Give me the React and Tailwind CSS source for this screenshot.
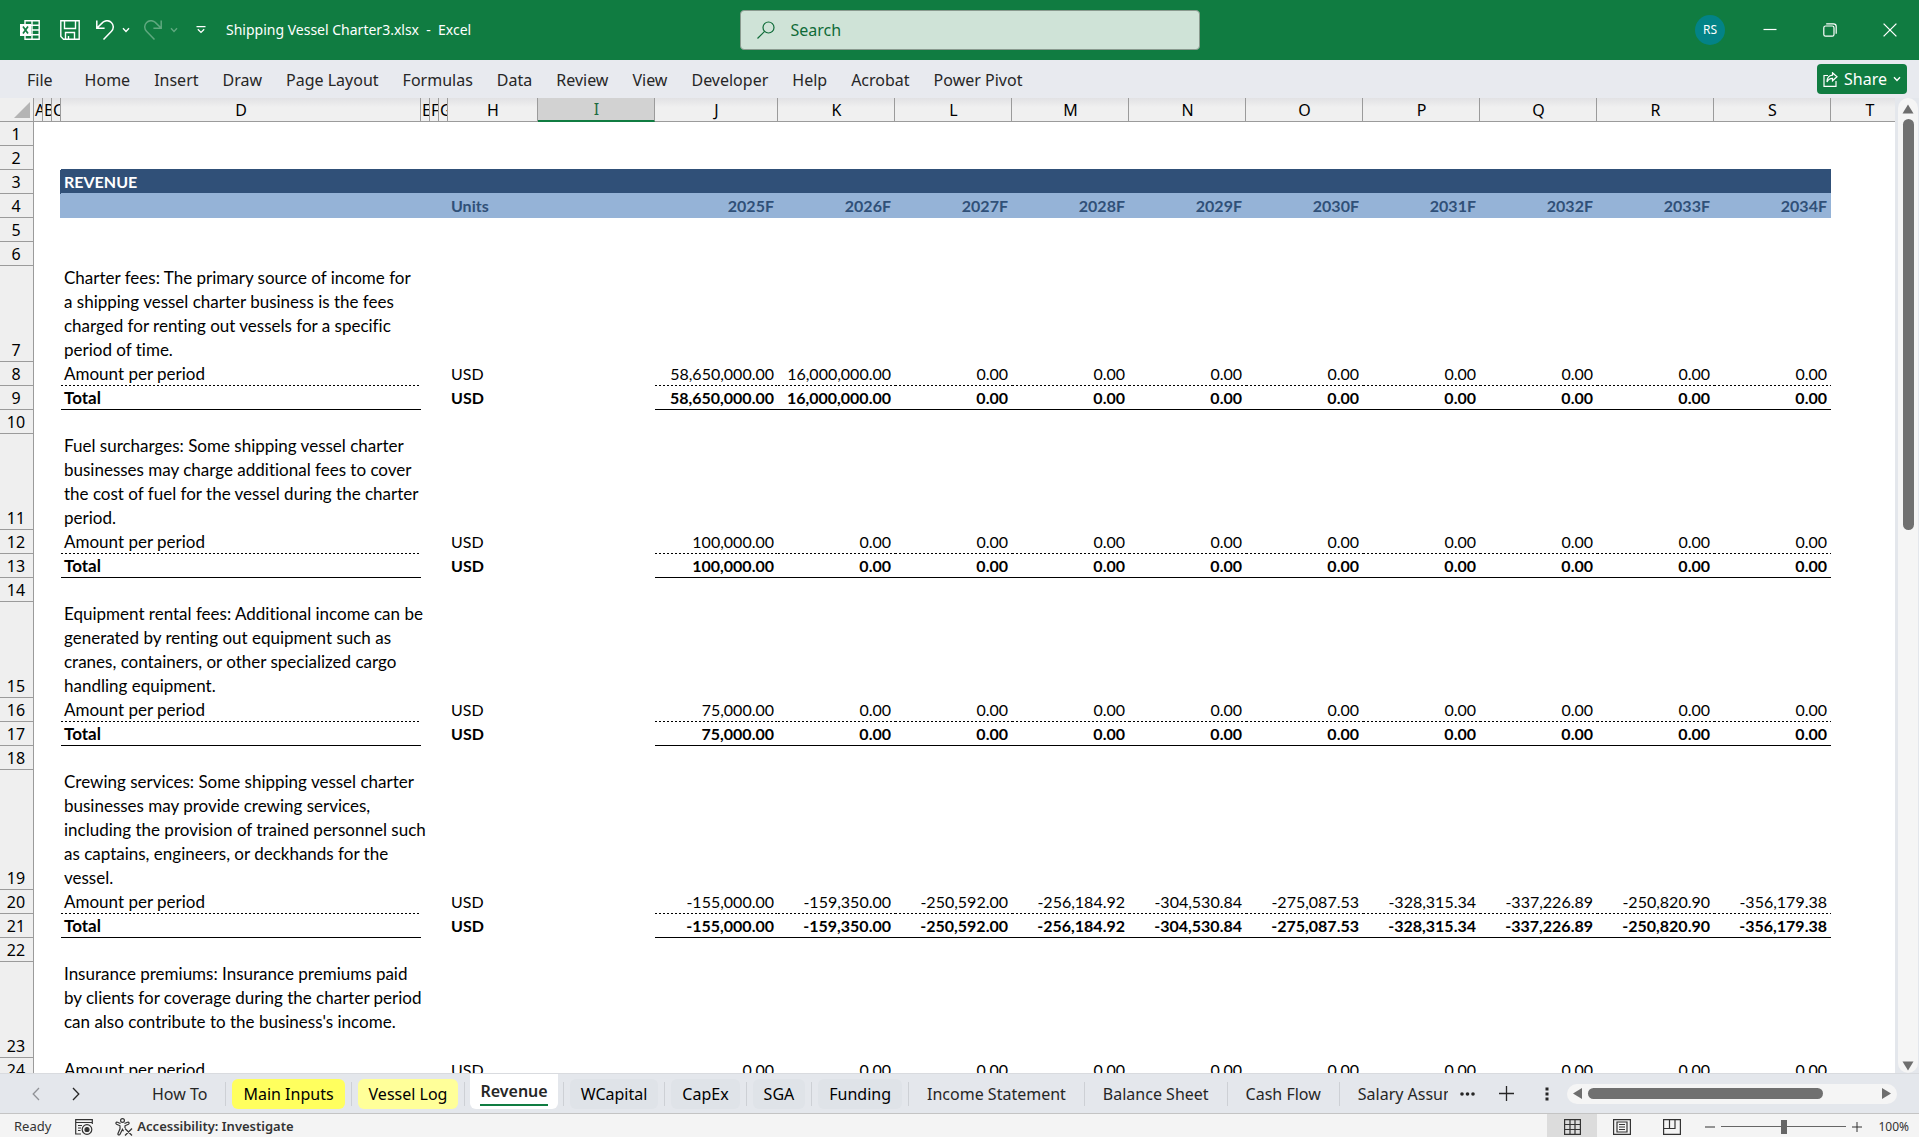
import { useState } from 'react';
import clsx from 'clsx';

const MENU = ['Home', 'Insert', 'Draw', 'Page Layout', 'Formulas', 'Data', 'Review', 'View', 'Developer', 'Help', 'Acrobat', 'Power Pivot'];

const COLUMNS = [
  { id: 'A', cls: 'w-[9px]' },
  { id: 'B', cls: 'w-[9px]' },
  { id: 'C', cls: 'w-[9px]' },
  { id: 'D', cls: 'w-[360px]' },
  { id: 'E', cls: 'w-[9px]' },
  { id: 'F', cls: 'w-[9px]' },
  { id: 'G', cls: 'w-[9px]' },
  { id: 'H', cls: 'w-[90px]' },
  { id: 'I', cls: 'w-[117px]' },
  { id: 'J', cls: 'w-[123px]' },
  { id: 'K', cls: 'w-[117px]' },
  { id: 'L', cls: 'w-[117px]' },
  { id: 'M', cls: 'w-[117px]' },
  { id: 'N', cls: 'w-[117px]' },
  { id: 'O', cls: 'w-[117px]' },
  { id: 'P', cls: 'w-[117px]' },
  { id: 'Q', cls: 'w-[117px]' },
  { id: 'R', cls: 'w-[117px]' },
  { id: 'S', cls: 'w-[117px]' },
  { id: 'T', cls: 'w-[78px]' },
];

const NARROW = ['A', 'B', 'C', 'E', 'F', 'G'];
const YEARS = ['2025F', '2026F', '2027F', '2028F', '2029F', '2030F', '2031F', '2032F', '2033F', '2034F'];
const zeros = (n) => Array(n).fill('0.00');

const CREWING = [
  '-155,000.00', '-159,350.00', '-250,592.00', '-256,184.92', '-304,530.84',
  '-275,087.53', '-328,315.34', '-337,226.89', '-250,820.90', '-356,179.38',
];

const ROWS = [
  { n: 1, type: 'blank' },
  { n: 2, type: 'blank', under: 'navy' },
  { n: 3, type: 'title', label: 'REVENUE' },
  { n: 4, type: 'years' },
  { n: 5, type: 'blank' },
  { n: 6, type: 'blank' },
  {
    n: 7, type: 'note', height: 'h-24',
    lines: ['Charter fees: The primary source of income for', 'a shipping vessel charter business is the fees', 'charged for renting out vessels for a specific', 'period of time.'],
  },
  { n: 8, type: 'amount', values: ['58,650,000.00', '16,000,000.00', ...zeros(8)] },
  { n: 9, type: 'total', values: ['58,650,000.00', '16,000,000.00', ...zeros(8)] },
  { n: 10, type: 'blank' },
  {
    n: 11, type: 'note', height: 'h-24',
    lines: ['Fuel surcharges: Some shipping vessel charter', 'businesses may charge additional fees to cover', 'the cost of fuel for the vessel during the charter', 'period.'],
  },
  { n: 12, type: 'amount', values: ['100,000.00', ...zeros(9)] },
  { n: 13, type: 'total', values: ['100,000.00', ...zeros(9)] },
  { n: 14, type: 'blank' },
  {
    n: 15, type: 'note', height: 'h-24',
    lines: ['Equipment rental fees: Additional income can be', 'generated by renting out equipment such as', 'cranes, containers, or other specialized cargo', 'handling equipment.'],
  },
  { n: 16, type: 'amount', values: ['75,000.00', ...zeros(9)] },
  { n: 17, type: 'total', values: ['75,000.00', ...zeros(9)] },
  { n: 18, type: 'blank' },
  {
    n: 19, type: 'note', height: 'h-[120px]',
    lines: ['Crewing services: Some shipping vessel charter', 'businesses may provide crewing services,', 'including the provision of trained personnel such', 'as captains, engineers, or deckhands for the', 'vessel.'],
  },
  { n: 20, type: 'amount', values: CREWING },
  { n: 21, type: 'total', values: CREWING },
  { n: 22, type: 'blank' },
  {
    n: 23, type: 'note', height: 'h-24',
    lines: ['Insurance premiums: Insurance premiums paid', 'by clients for coverage during the charter period', "can also contribute to the business's income."],
  },
  { n: 24, type: 'amount', values: zeros(10) },
];

const TABS = [
  { name: 'How To' },
  { name: 'Main Inputs', fill: 'bg-[#ffff5e]' },
  { name: 'Vessel Log', fill: 'bg-[#ffff99]' },
  { name: 'Revenue' },
  { name: 'WCapital', fill: 'bg-[#dfe3e8]' },
  { name: 'CapEx', fill: 'bg-[#dfe3e8]' },
  { name: 'SGA', fill: 'bg-[#dfe3e8]' },
  { name: 'Funding', fill: 'bg-[#dfe3e8]' },
  { name: 'Income Statement' },
  { name: 'Balance Sheet' },
  { name: 'Cash Flow' },
];

const DASHED = 'bg-[repeating-linear-gradient(90deg,#000_0_2px,transparent_2px_4px)] bg-[length:100%_1px] bg-bottom bg-no-repeat';

function Chevron({ className }) {
  return (
    <svg viewBox="0 0 8 6" className={className} fill="none" stroke="currentColor" strokeWidth="1.4">
      <path d="M1 1.2 4 4.4 7 1.2" />
    </svg>
  );
}

function TitleBar() {
  return (
    <header className="h-[60px] shrink-0 pl-5 bg-[#107c41] text-white grid grid-cols-[1fr_460px_1fr] items-center">
      <div className="flex items-center min-w-0">
        <svg viewBox="0 0 20 20" className="w-5 h-5" fill="none" stroke="currentColor" strokeWidth="1.4">
          <path d="M5 4V.8h14.2v18.4H5V16M12 .8v18.4M5 5.3h14M12 10h7.2M5 14.7h14.2" />
          <rect x="0" y="4" width="11" height="12" fill="currentColor" stroke="none" />
          <path d="m3 6.5 5 7m0-7-5 7" stroke="#107c41" strokeWidth="1.7" />
        </svg>
        <button aria-label="Save" className="ml-5">
          <svg viewBox="0 0 20 20" className="w-5 h-5" fill="none" stroke="currentColor" strokeWidth="1.4">
            <path d="M.8.8h18.4v18.4H3.5L.8 16.500zM4.500 1v7.500h11V1M5.500 19v-6.500h9V19M8.500 19v-3" />
          </svg>
        </button>
        <button aria-label="Undo" className="ml-4 flex items-center gap-2">
          <svg viewBox="0 0 18 20" className="w-[18px] h-5" fill="none" stroke="currentColor" strokeWidth="1.5">
            <path d="M.8.5v7.8h7.8M1 8 6.500 2.600a6.200 6.200 0 0 1 9 8.700L7.500 19.500" />
          </svg>
          <Chevron className="w-2 h-1.5" />
        </button>
        <button aria-label="Redo" className="ml-3.5 flex items-center gap-2 text-[#5fa87f]">
          <svg viewBox="0 0 18 20" className="w-[18px] h-5" fill="none" stroke="currentColor" strokeWidth="1.5">
            <path d="M17.200.5v7.800H9.400M17 8 11.500 2.600a6.200 6.200 0 0 0-9 8.700l8 8.200" />
          </svg>
          <Chevron className="w-2 h-1.5" />
        </button>
        <button aria-label="Customize Quick Access Toolbar" className="ml-[18px]">
          <svg viewBox="0 0 10 8" className="w-2.5 h-2" fill="none" stroke="currentColor" strokeWidth="1.3">
            <path d="M.5.7h9M1.800 3.200 5 6.400l3.200-3.200" />
          </svg>
        </button>
        <h1 className="ml-5 text-sm whitespace-pre">{'Shipping Vessel Charter3.xlsx  -  Excel'}</h1>
      </div>
      <label className="h-10 flex items-center gap-4 px-4 rounded-sm border border-[#8a9a8f] bg-[#cfe3d7] text-[#0f6b38]">
        <svg viewBox="0 0 18 18" className="w-[18px] h-[18px]" fill="none" stroke="currentColor" strokeWidth="1.2">
          <circle cx="11.500" cy="6.500" r="5.500" />
          <path d="M7.600 10.400.5 17.500" />
        </svg>
        <input type="text" aria-label="Search" placeholder="Search" className="flex-1 bg-transparent outline-none placeholder:text-[#0f6b38]" />
      </label>
      <div className="flex items-center justify-end pr-[22px]">
        <button className="w-[30px] h-[30px] rounded-full bg-[#038387] text-xs">RS</button>
        <button aria-label="Minimize" className="ml-[38px]">
          <svg viewBox="0 0 14 14" className="w-3.5 h-3.5" stroke="currentColor" strokeWidth="1.200"><path d="M.5 6.500h13" /></svg>
        </button>
        <button aria-label="Restore" className="ml-[46px]">
          <svg viewBox="0 0 14 14" className="w-3.5 h-3.5" fill="none" stroke="currentColor" strokeWidth="1.200">
            <rect x=".8" y="3" width="10.200" height="10.200" rx="1.800" />
            <path d="M3.200.9H10.500a2.700 2.700 0 0 1 2.700 2.700v7.200" />
          </svg>
        </button>
        <button aria-label="Close" className="ml-[46px]">
          <svg viewBox="0 0 14 14" className="w-3.5 h-3.5" stroke="currentColor" strokeWidth="1.300"><path d="m.6.6 12.800 12.800M13.400.6.6 13.400" /></svg>
        </button>
      </div>
    </header>
  );
}

function MenuBar() {
  return (
    <nav className="h-[38px] shrink-0 bg-[#e8eaef] text-[#262626] flex items-center pl-[27px] pr-3">
      <div className="flex gap-6 flex-1 pt-0.5">
        <button className="mr-2">File</button>
        {MENU.map((item) => <button key={item} className="whitespace-nowrap">{item}</button>)}
      </div>
      <button className="h-[30px] px-1.5 flex items-center gap-1.5 rounded bg-[#107c41] text-white">
        <svg viewBox="0 0 15 15" className="w-[15px] h-[15px]" fill="none" stroke="currentColor" strokeWidth="1.200">
          <path d="M5 3.500H1v10.900h12V9M9.500.8l4.500 4-4.500 4V6.400C7 6.400 5.200 7.500 4 10c0-4 2.200-6.600 5.500-6.900z" />
        </svg>
        Share
        <Chevron className="w-2 h-1.5" />
      </button>
    </nav>
  );
}

function cellFor(row, col) {
  const colIndex = COLUMNS.findIndex((c) => c.id === col);
  const inBand = colIndex >= 3 && colIndex <= 18;
  const year = colIndex - 9;
  const isYear = year >= 0 && year < 10;
  const lined = col === 'D' || isYear;

  switch (row.type) {
    case 'title':
      return {
        text: col === 'D' ? row.label : '',
        cls: inBand ? 'bg-[#305078] border-b border-[#95b3d7] text-white font-bold' : col === 'C' ? 'border-r border-[#305078]' : '',
      };
    case 'years':
      return {
        text: isYear ? YEARS[year] : col === 'H' ? 'Units' : '',
        cls: clsx(inBand && 'bg-[#95b3d7] text-[#305078] font-bold', isYear && 'text-right', col === 'C' && 'border-r border-[#95b3d7]'),
      };
    case 'amount':
      return {
        text: isYear ? row.values[year] : col === 'D' ? 'Amount per period' : col === 'H' ? 'USD' : '',
        cls: clsx(lined && DASHED, isYear && 'text-right', col === 'D' && 'text-[17px]'),
      };
    case 'total':
      return {
        text: isYear ? row.values[year] : col === 'D' ? 'Total' : col === 'H' ? 'USD' : '',
        cls: clsx('font-bold', lined && 'border-b border-black', isYear && 'text-right', col === 'D' && 'text-[17px]'),
      };
    case 'note':
      return { text: col === 'D' ? row.lines.map((l) => <div key={l}>{l}</div>) : '', cls: 'text-[17px]' };
    default:
      return { text: '', cls: row.under && inBand ? 'border-b border-[#305078]' : '' };
  }
}

function Sheet() {
  return (
    <div className="flex-1 min-w-0 overflow-hidden bg-white">
      <table className="table-fixed w-[1909px] border-separate border-spacing-0 text-black">
        <colgroup>
          <col className="w-[34px]" />
          {COLUMNS.map((c) => <col key={c.id} className={c.cls} />)}
        </colgroup>
        <thead>
          <tr className="h-6">
            <th className="p-0 border-r border-b border-[#9b9b9b] bg-[#efefef]">
              <svg viewBox="0 0 16 16" className="w-4 h-4 ml-3.5 fill-[#b4b4b4]"><path d="M16 0v16H0z" /></svg>
            </th>
            {COLUMNS.map((c) => (
              <th
                key={c.id}
                scope="col"
                className={clsx(
                  'p-0 pl-px h-6 font-normal leading-[22px] overflow-hidden border-r border-[#9b9b9b]',
                  c.id === 'I' ? 'bg-[#d2d2d2] text-[#1e6b41] border-b-2 border-b-[#107c41]' : 'border-b bg-linear-to-b from-[#e2e2e4] to-[#f0f0f0] to-40%',
                  NARROW.includes(c.id) && 'text-left',
                )}
              >
                {c.id}
              </th>
            ))}
          </tr>
        </thead>
        <tbody className="font-[Lato,sans-serif] [font-variant-ligatures:none]">
          {ROWS.map((row) => (
            <tr key={row.n} className={row.height || 'h-6'}>
              <th scope="row" className="p-0 pr-px align-bottom font-[Noto_Sans,sans-serif] font-normal leading-[21px] bg-[#efefef] border-r border-b border-[#9b9b9b]">
                {row.n}
              </th>
              {COLUMNS.map((c) => {
                const { text, cls } = cellFor(row, c.id);
                return (
                  <td
                    key={c.id}
                    className={clsx('p-0 align-top whitespace-nowrap', row.type === 'note' ? 'leading-6' : 'leading-[23px]', text && 'pl-[3px] pr-1', cls)}
                  >
                    {text}
                  </td>
                );
              })}
            </tr>
          ))}
        </tbody>
      </table>
    </div>
  );
}

function VerticalScroll() {
  return (
    <div className="w-6 shrink-0 pl-[3px] bg-[#e4e7ec]">
      <div className="h-full w-5 rounded-full bg-[#f5f5f5] flex flex-col items-center pt-1.5 pb-0.5">
        <svg viewBox="0 0 12 10" className="w-3 h-2.5 fill-[#6e6e6e]"><path d="M6 .5 11.500 9.500H.5z" /></svg>
        <div className="flex-1 w-full flex flex-col items-center pt-[5px] pb-2">
          <div className="w-[11px] h-[44%] rounded-full bg-[#707070]" />
        </div>
        <svg viewBox="0 0 12 10" className="w-3 h-2.5 fill-[#6e6e6e]"><path d="M6 9.500.5.5h11z" /></svg>
      </div>
    </div>
  );
}

function SheetTabs({ active, onSelect }) {
  return (
    <div className="h-10 shrink-0 flex items-center bg-[#e4e7ec] text-[#262626] border-t border-[#d9dbdf]">
      <div className="flex items-center gap-8 pl-8 pr-[54px]">
        <button aria-label="Previous sheet" className="text-[#8f9196]">
          <svg viewBox="0 0 8 14" className="w-2 h-3.5" fill="none" stroke="currentColor" strokeWidth="1.300"><path d="M7 1 1.200 7 7 13" /></svg>
        </button>
        <button aria-label="Next sheet">
          <svg viewBox="0 0 8 14" className="w-2 h-3.5" fill="none" stroke="currentColor" strokeWidth="1.300"><path d="m1 1 5.800 6L1 13" /></svg>
        </button>
      </div>
      <div role="tablist" className="flex items-center h-full">
        {TABS.map((tab) => (
          <div key={tab.name} className="flex items-center h-full">
            {tab.name === active ? (
              <button role="tab" aria-selected="true" className="h-full pb-1 mx-[5px]" onClick={() => onSelect(tab.name)}>
                <span className="h-full px-2.5 flex items-center bg-white rounded-b-md font-semibold">
                  <span className="leading-[26px] border-b-2 border-[#107c41]">{tab.name}</span>
                </span>
              </button>
            ) : (
              <button
                role="tab"
                aria-selected="false"
                className={clsx('h-[30px] rounded-md whitespace-nowrap', tab.fill ? 'px-[11px] mx-1.5 text-black' : 'px-[18px]', tab.fill)}
                onClick={() => onSelect(tab.name)}
              >
                {tab.name}
              </button>
            )}
            <span className="w-px h-6 bg-[#cdd0d5]" />
          </div>
        ))}
        <button role="tab" aria-selected="false" className="w-[108px] pl-[18px] overflow-hidden whitespace-nowrap text-left">Salary Assumptions</button>
      </div>
      <button aria-label="More sheets" className="ml-3">
        <svg viewBox="0 0 15 4" className="w-[15px] h-1" fill="currentColor"><circle cx="2" cy="2" r="1.800" /><circle cx="7.500" cy="2" r="1.800" /><circle cx="13" cy="2" r="1.800" /></svg>
      </button>
      <button aria-label="New sheet" className="ml-6">
        <svg viewBox="0 0 15 15" className="w-[15px] h-[15px]" stroke="currentColor" strokeWidth="1.300"><path d="M7.500 0v15M0 7.500h15" /></svg>
      </button>
      <div className="flex-1 flex justify-end items-center gap-[18px] pr-[22px]">
        <svg viewBox="0 0 4 14" className="w-1 h-3.5" fill="currentColor"><path d="M.5.5h3v3h-3zM.5 5.500h3v3h-3zM.5 10.500h3v3h-3z" /></svg>
        <div className="w-[330px] h-5 px-1.5 flex items-center rounded-full bg-[#f5f5f5]">
          <svg viewBox="0 0 9 11" className="w-[9px] h-[11px] fill-[#6e6e6e]"><path d="M9 0v11L0 5.500z" /></svg>
          <div className="flex-1 px-1.5">
            <div className="w-[235px] h-[11px] rounded-full bg-[#707070]" />
          </div>
          <svg viewBox="0 0 9 11" className="w-[9px] h-[11px] fill-[#6e6e6e]"><path d="M0 0v11l9-5.500z" /></svg>
        </div>
      </div>
    </div>
  );
}

function StatusBar() {
  return (
    <footer className="h-6 shrink-0 flex items-center pl-3.5 pr-2.5 border-t border-[#c4c4c4] bg-[#f4f4f4] text-[13px] text-[#333]">
      <div className="flex items-center pt-0.5">
        <span>Ready</span>
        <button aria-label="Record macro" className="ml-6">
          <svg viewBox="0 0 18 16" className="w-[18px] h-4" fill="none" stroke="currentColor" strokeWidth="1.200">
            <path d="M6 15H.7V.7h16.600V5M.7 3.500h16.600M3 6.500h4M3 9h3M3 11.500h2.500" />
            <circle cx="12" cy="10.500" r="4.800" />
            <circle cx="12" cy="10.500" r="2" fill="currentColor" />
          </svg>
        </button>
        <button className="ml-[22px] flex items-center gap-1 font-semibold">
          <svg viewBox="0 0 18 18" className="w-[18px] h-[18px]" fill="none" stroke="currentColor" strokeWidth="1.200">
            <circle cx="7.500" cy="2.500" r="1.900" />
            <path d="M5.500 5.500 2.500 4.200C1 3.600.3 5.500 1.600 6.200L5 7.800v3l-2 4.700c-.5 1.500 1.500 2 2 .8l2.500-5 1 2M9.500 5.500l3-1.300c1.500-.6 2.200 1.300.9 2L10 7.800V10M10 10.500l7 7m0-7-7 7" />
          </svg>
          Accessibility: Investigate
        </button>
      </div>
      <div className="flex-1 flex justify-end items-center h-full">
        <button aria-label="Normal view" className="w-[50px] h-full pt-0.5 flex items-center justify-center bg-[#dcdcdc]">
          <svg viewBox="0 0 17 16" className="w-[17px] h-4" fill="none" stroke="currentColor" strokeWidth="1.200"><path d="M.6.6h15.800v14.800H.6zM.6 5.500h15.800M.6 10.500h15.800M6 .6v14.800M11 .6v14.800" /></svg>
        </button>
        <button aria-label="Page layout view" className="w-[50px] h-full pt-0.5 flex items-center justify-center">
          <svg viewBox="0 0 18 16" className="w-[18px] h-4" fill="none" stroke="currentColor" strokeWidth="1.200"><path d="M.6.6h16.800v14.800H.6zM4 3h10v10H4zM6 5.500h6M6 8h6M6 10.500h6" /></svg>
        </button>
        <button aria-label="Page break preview" className="w-[50px] h-full pt-0.5 flex items-center justify-center">
          <svg viewBox="0 0 18 16" className="w-[18px] h-4" fill="none" stroke="currentColor" strokeWidth="1.200"><path d="M.6.6h16.800v14.800H.6zM.6 9.500H12V.6M6.500.6v9" /></svg>
        </button>
        <div className="flex items-center pt-0.5 ml-2">
          <button aria-label="Zoom out">
            <svg viewBox="0 0 10 10" className="w-2.5 h-2.5" stroke="currentColor"><path d="M0 5h10" /></svg>
          </button>
          <input
            type="range"
            aria-label="Zoom"
            min="0"
            max="100"
            defaultValue="50"
            className="mx-1.5 w-[125px] h-3.5 appearance-none bg-linear-to-r from-[#666] to-[#666] bg-[length:100%_1px] bg-center bg-no-repeat [&::-webkit-slider-thumb]:appearance-none [&::-webkit-slider-thumb]:w-1.5 [&::-webkit-slider-thumb]:h-3.5 [&::-webkit-slider-thumb]:bg-[#666]"
          />
          <button aria-label="Zoom in">
            <svg viewBox="0 0 10 10" className="w-2.5 h-2.5" stroke="currentColor"><path d="M0 5h10M5 0v10" /></svg>
          </button>
          <span className="ml-4 text-xs">100%</span>
        </div>
      </div>
    </footer>
  );
}

export default function App() {
  const [active, setActive] = useState('Revenue');

  return (
    <div className="h-screen flex flex-col overflow-hidden font-[Noto_Sans,sans-serif] text-base">
      <TitleBar />
      <MenuBar />
      <main className="flex-1 min-h-0 flex">
        <Sheet />
        <VerticalScroll />
      </main>
      <SheetTabs active={active} onSelect={setActive} />
      <StatusBar />
    </div>
  );
}
